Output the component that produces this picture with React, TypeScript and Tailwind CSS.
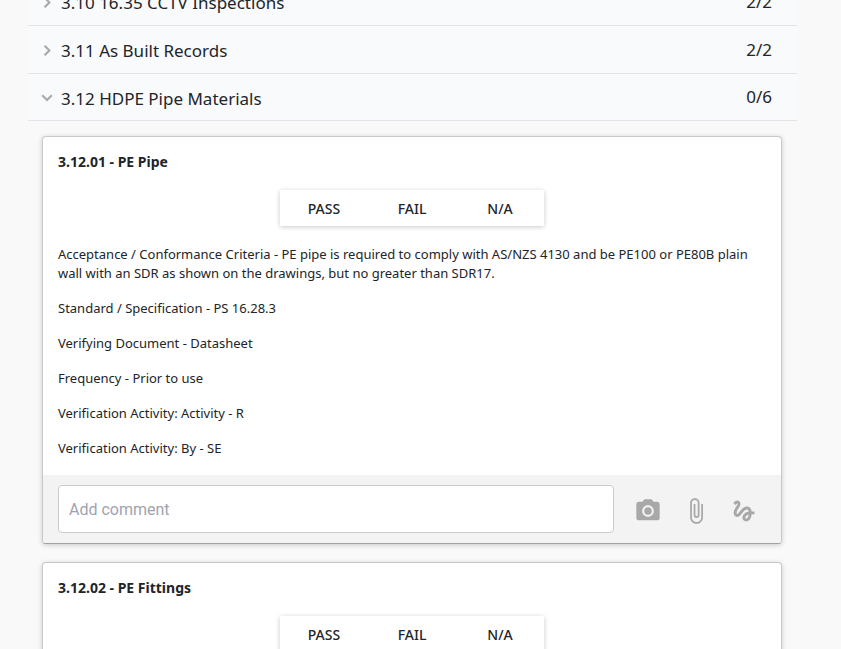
import React from "react";
import { MdAttachFile, MdCameraAlt, MdGesture } from "react-icons/md";

type Section = { title: string; count: string; open?: boolean };
type Check = { id: string; title: string; criteria: string[] };

const sections: Section[] = [
  { title: "3.10 16.35 CCTV Inspections", count: "2/2" },
  { title: "3.11 As Built Records", count: "2/2" },
  { title: "3.12 HDPE Pipe Materials", count: "0/6", open: true },
];

const criteria = [
  "Acceptance / Conformance Criteria - PE pipe is required to comply with AS/NZS 4130 and be PE100 or PE80B plain wall with an SDR as shown on the drawings, but no greater than SDR17.",
  "Standard / Specification - PS 16.28.3",
  "Verifying Document - Datasheet",
  "Frequency - Prior to use",
  "Verification Activity: Activity - R",
  "Verification Activity: By - SE",
];

const checks: Check[] = [
  { id: "pipe", title: "3.12.01 - PE Pipe", criteria },
  { id: "fittings", title: "3.12.02 - PE Fittings", criteria: [] },
];

function Chevron({ open }: { open?: boolean }) {
  return (
    <svg
      viewBox="0 0 12 12"
      className="size-3 shrink-0 text-[#a8a8a8]"
      fill="none"
      stroke="currentColor"
      strokeWidth="2"
      aria-hidden="true"
    >
      <path d={open ? "M1.2 4.2 6 9l4.8-4.8" : "M3.6 1.7 8.4 6.5l-4.8 4.8"} />
    </svg>
  );
}

function SectionRow({ title, count, open }: Section) {
  return (
    <button
      type="button"
      aria-expanded={!!open}
      className="flex h-12 w-full items-center border-b border-[#e1e5ea] bg-[#f9fafc] pr-[25px] pl-[13px] text-left text-[17px] leading-6 last:h-[47px]"
    >
      <Chevron open={open} />
      <span className="ml-2 grow pt-[3px]">{title}</span>
      <span>{count}</span>
    </button>
  );
}

function CheckCard({ id, title, criteria }: Check) {
  return (
    <article className="overflow-hidden rounded border border-[#c9c9c9] border-b-[#a0a0a0] bg-white shadow-[0_1px_5px_rgba(0,0,0,0.2)]">
      <div className="px-[15px] pt-[15px] pb-[17px] text-[13px] leading-[19px]">
        <h2 className="text-[14px] leading-[19px] font-bold">{title}</h2>
        <div className="mt-[19px] flex justify-center">
          <div role="group" aria-label={title} className="flex rounded-xs shadow-[0_1px_5px_rgba(0,0,0,0.22)]">
            {["PASS", "FAIL", "N/A"].map((label) => (
              <button key={label} type="button" className="h-9 w-22 rounded-xs bg-white text-[14px] font-medium">
                {label}
              </button>
            ))}
          </div>
        </div>
        <div className="mt-[19px] flex flex-col gap-4">
          {criteria.map((line) => (
            <p key={line}>{line}</p>
          ))}
        </div>
      </div>
      <div className="flex items-center bg-[#f3f3f3] py-[10px] pr-[23px] pl-[15px] text-[#a8a8a8]">
        <label htmlFor={id} className="sr-only">
          Add comment
        </label>
        <input
          id={id}
          placeholder="Add comment"
          className="h-12 min-w-0 grow rounded border border-[#cccccc] bg-white px-[10px] font-['Roboto',sans-serif] text-base text-gray-800 placeholder:text-[#a0a3b1]"
        />
        <div className="ml-5 flex gap-5 pt-[3px]">
          <button type="button" aria-label="Add photo">
            <MdCameraAlt size={28} />
          </button>
          <button type="button" aria-label="Attach file">
            <MdAttachFile size={28} />
          </button>
          <button type="button" aria-label="Add signature">
            <MdGesture size={28} />
          </button>
        </div>
      </div>
    </article>
  );
}

export default function App() {
  return (
    <main className="h-screen overflow-hidden bg-[#f9f9f9] pr-11 pl-7 font-['Noto_Sans',sans-serif] text-[#212529]">
      <nav aria-label="Sections" className="-mt-[22px]">
        {sections.map((section) => (
          <SectionRow key={section.title} {...section} />
        ))}
      </nav>
      <div className="mt-[15px] flex flex-col gap-[18px] pr-[15px] pl-[14px]">
        {checks.map((check) => (
          <CheckCard key={check.id} {...check} />
        ))}
      </div>
    </main>
  );
}
